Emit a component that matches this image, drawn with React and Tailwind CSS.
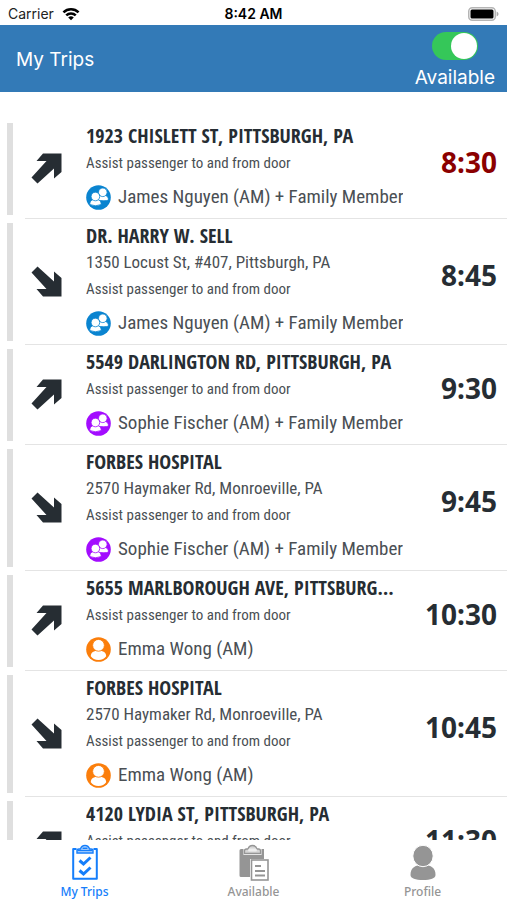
import React, { useState } from "react";
import clsx from "clsx";

const TRIPS = [
	{ id: 1, type: "pickup", title: "1923 CHISLETT ST, PITTSBURGH, PA", rider: "James Nguyen (AM) + Family Member", group: true, color: "text-[#0a84d0]", time: "8:30", late: true },
	{ id: 2, type: "dropoff", title: "DR. HARRY W. SELL", address: "1350 Locust St, #407, Pittsburgh, PA", rider: "James Nguyen (AM) + Family Member", group: true, color: "text-[#0a84d0]", time: "8:45" },
	{ id: 3, type: "pickup", title: "5549 DARLINGTON RD, PITTSBURGH, PA", rider: "Sophie Fischer (AM) + Family Member", group: true, color: "text-[#a30cff]", time: "9:30" },
	{ id: 4, type: "dropoff", title: "FORBES HOSPITAL", address: "2570 Haymaker Rd, Monroeville, PA", rider: "Sophie Fischer (AM) + Family Member", group: true, color: "text-[#a30cff]", time: "9:45" },
	{ id: 5, type: "pickup", title: "5655 MARLBOROUGH AVE, PITTSBURGH, PA", rider: "Emma Wong (AM)", color: "text-[#fb7e0b]", time: "10:30" },
	{ id: 6, type: "dropoff", title: "FORBES HOSPITAL", address: "2570 Haymaker Rd, Monroeville, PA", rider: "Emma Wong (AM)", color: "text-[#fb7e0b]", time: "10:45" },
	{ id: 7, type: "pickup", title: "4120 LYDIA ST, PITTSBURGH, PA", rider: "Emma Wong (AM)", color: "text-[#fb7e0b]", time: "11:30" }
];

const TABS = [
	{ name: "My Trips", Icon: ChecklistIcon },
	{ name: "Available", Icon: ClipboardPasteIcon },
	{ name: "Profile", Icon: ProfileIcon }
];

export default function App() {
	const [tab, setTab] = useState("My Trips");

	return (
		<div className="flex h-screen flex-col bg-white font-['Inter','Liberation_Sans',sans-serif]">
			<StatusBar />
			<Header />
			<main className="min-h-0 flex-1 overflow-hidden pt-[27px]">
				<ul>
					{TRIPS.map(trip => (
						<TripRow key={trip.id} trip={trip} />
					))}
				</ul>
			</main>
			<nav className="grid h-15 shrink-0 grid-cols-3 bg-white">
				{TABS.map(({ name, Icon }) => (
					<button
						key={name}
						type="button"
						onClick={() => setTab(name)}
						className={clsx(
							"flex flex-col items-center gap-0.5 pt-1 font-['Noto_Sans',sans-serif] text-xs leading-[17px] font-medium",
							tab === name ? "text-[#157efb]" : "text-[#959595]"
						)}>
						<Icon />
						{name}
					</button>
				))}
			</nav>
		</div>
	);
}

function StatusBar() {
	return (
		<div className="grid h-[25px] shrink-0 grid-cols-3 items-center px-2 pt-0.5 text-sm text-[#222]">
			<div className="flex items-center gap-2">
				<span>Carrier</span>
				<svg width="18" height="14" viewBox="0 0 20 15" fill="none" stroke="#000" strokeWidth="2.8">
					<path d="M1.6 5.6a12 12 0 0 1 16.8 0" />
					<path d="M4.7 9a7.6 7.6 0 0 1 10.6 0" />
					<path d="M10 14.5 6.9 11.4a4.5 4.5 0 0 1 6.2 0z" fill="#000" stroke="none" />
				</svg>
			</div>
			<span className="text-center font-semibold text-black">8:42 AM</span>
			<svg className="justify-self-end" width="31" height="14" viewBox="0 0 31 14">
				<rect x="0.75" y="0.75" width="26.5" height="12.5" rx="3.5" fill="#fff" stroke="#b5b5b5" strokeWidth="1.5" />
				<rect x="2.5" y="2.5" width="23" height="9" rx="1.5" fill="#000" />
				<path d="M28.6 4.5c1.2.5 1.9 1.4 1.9 2.5s-.7 2-1.9 2.5z" fill="#aaa" />
			</svg>
		</div>
	);
}

function Header() {
	const [available, setAvailable] = useState(true);

	return (
		<header className="flex h-[67px] shrink-0 items-center justify-between bg-[#337ab7] pr-3 pl-4 text-[19px] text-white">
			<h1 className="pt-1">My Trips</h1>
			<label className="flex flex-col items-center gap-1 pt-1.5">
				<span className="relative flex h-7 w-[46px]">
					<input
						type="checkbox"
						role="switch"
						checked={available}
						onChange={e => setAvailable(e.target.checked)}
						className="peer h-7 w-full appearance-none rounded-full bg-gray-300 checked:bg-[#35c759]"
					/>
					<span className="pointer-events-none absolute top-px left-px size-[26px] rounded-full bg-white peer-checked:left-[19px]" />
				</span>
				<span className="leading-7">Available</span>
			</label>
		</header>
	);
}

function TripRow({ trip }) {
	return (
		<li className="flex font-['Roboto_Condensed','Liberation_Sans_Narrow',sans-serif] text-[#4a4f54]">
			<div className="my-1 ml-[7px] w-1.5 shrink-0 bg-[#dfdfdf]" />
			<div className="ml-3 flex min-w-0 flex-1 items-center border-b border-[#e4e4e4] pr-2.5 pl-1.5">
				<ArrowIcon down={trip.type === "dropoff"} />
				<div className="ml-6 min-w-0 flex-1 pt-[3px] pb-0.5">
					<h2 className="truncate pr-3 font-['Open_Sans_Condensed','Roboto_Condensed',sans-serif] text-xl leading-[27px] font-bold text-[#262d33]">
						{trip.title}
					</h2>
					{trip.address && <p className="truncate text-[17px] leading-[26px]">{trip.address}</p>}
					<p className="truncate text-[15px] leading-[29px]">Assist passenger to and from door</p>
					<div className="flex h-[38px] items-center gap-[7px]">
						<RiderIcon group={trip.group} className={trip.color} />
						<span className="min-w-0 truncate text-[19px]">{trip.rider}</span>
					</div>
				</div>
				<time
					className={clsx(
						"w-[86px] shrink-0 pb-3.5 text-right font-['Noto_Sans',sans-serif] text-[28px] leading-10 font-bold",
						trip.late ? "text-[#8b0000]" : "text-[#262d33]"
					)}>
					{trip.time}
				</time>
			</div>
		</li>
	);
}

function ArrowIcon({ down }) {
	return (
		<svg className={clsx("shrink-0", down && "rotate-90")} width="31" height="31" viewBox="0 0 31 31" fill="#262d33">
			<path d="M12 .5H30.5V19L23 25.5V15.5L6.5 30.5L.5 24.5L15.5 8H5.5z" />
		</svg>
	);
}

function RiderIcon({ group, className }) {
	return (
		<svg className={clsx("shrink-0", className)} width="25" height="25" viewBox="0 0 25 25">
			<circle cx="12.5" cy="12.5" r="12.3" fill="currentColor" />
			{group ? (
				<g fill="#fff" stroke="currentColor" strokeWidth="0.8">
					<path d="M11 15c0-4 2.5-5 5.5-5s6 1.2 6 5q-3.5 1.5-11.5 0z" />
					<circle cx="16.8" cy="7.3" r="4.3" />
					<path d="M3.8 19.5c0-3.8 2.2-5.1 5.7-5.1s5.7 1.3 5.7 5.1q-5.7 2.6-11.4 0z" />
					<circle cx="9.4" cy="11.5" r="4.3" />
				</g>
			) : (
				<g fill="#fff">
					<path d="M4.8 19.2c0-3.6 3-5.4 7.7-5.4s7.7 1.8 7.7 5.4c-1.5 2.3-4.3 3.7-7.7 3.7s-6.2-1.4-7.7-3.7z" />
					<circle cx="12.5" cy="8.3" r="5.9" stroke="currentColor" strokeWidth="0.9" />
				</g>
			)}
		</svg>
	);
}

function ChecklistIcon() {
	return (
		<svg width="26" height="37" viewBox="0 0 26 37" fill="none" stroke="currentColor">
			<path d="M4.5 5H1.2V34.8H24.8V5H21.5" strokeWidth="2" strokeLinejoin="round" />
			<path d="M5 9V6.5q0-1.5 2-1.5h1.5Q9.5 1.5 13 1.5T17.5 5H19q2 0 2 1.5V9z" fill="currentColor" fillOpacity="0.25" strokeWidth="1.4" />
			<path d="M5.5 6.5h15M10.5 4.2h5" strokeWidth="1.5" />
			<path d="M7.5 16.5l4 3.5L18.5 13.5M7.5 26.5l4 3.5 7-6.5" strokeWidth="3" />
		</svg>
	);
}

function ClipboardPasteIcon() {
	return (
		<svg width="30" height="37" viewBox="0 0 30 37">
			<path d="M2 5H4.5V11H22.5V5H25V15H11V33H2q-1.5 0-1.5-1.5V6.5Q.5 5 2 5z" fill="currentColor" />
			<path d="M5.5 9.5V7q0-2 2-2h1.5Q10 1.5 13.5 1.5T18 5H19.5q2 0 2 2V9.5z" fill="currentColor" fillOpacity="0.4" stroke="currentColor" strokeWidth="1.3" />
			<rect x="9" y="4.5" width="9" height="3" rx="1.5" fill="#fff" fillOpacity="0.6" />
			<rect x="12.5" y="16" width="16.5" height="20" fill="#fff" stroke="currentColor" strokeWidth="1.6" />
			<path d="M16 22h6M16 27h10M16 31.5h10" stroke="currentColor" strokeWidth="1.8" />
		</svg>
	);
}

function ProfileIcon() {
	return (
		<svg width="26" height="37" viewBox="0 0 26 37" fill="currentColor">
			<path d="M.5 31c0-7 4-10 12.5-10s12.5 3 12.5 10c0 3.5-5 5-12.5 5S.5 34.5.5 31z" />
			<ellipse cx="13" cy="12" rx="10.2" ry="10.7" stroke="#fff" />
		</svg>
	);
}
